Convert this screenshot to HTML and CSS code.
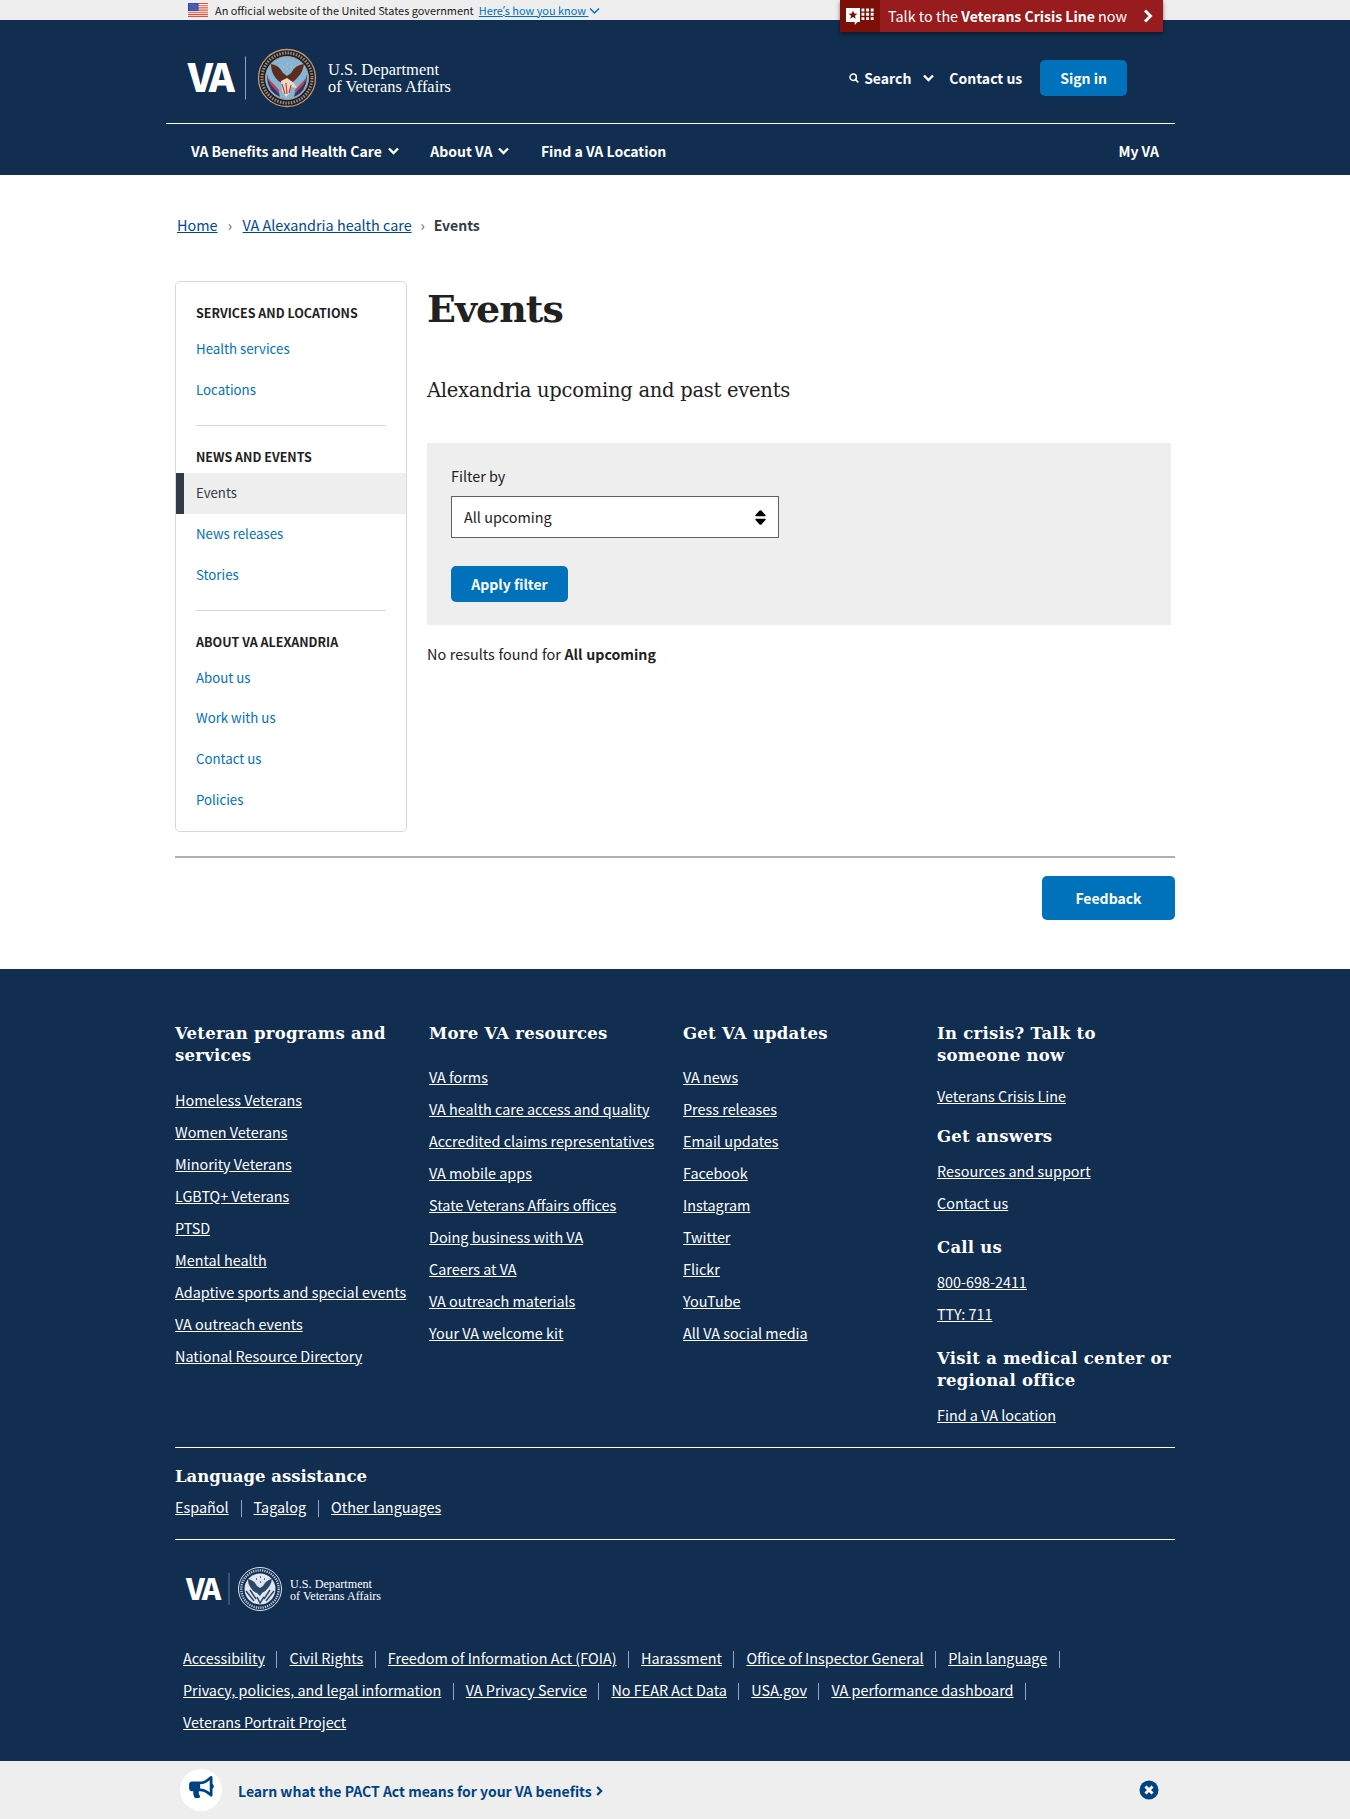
FILE: index.html
```html
<!DOCTYPE html>
<html lang="en">
<head>
<meta charset="utf-8">
<title>Events | VA Alexandria health care</title>
<link rel="stylesheet" href="styles.css">
</head>
<body>
<div class="gov-banner">
  <div class="gov-inner">
    <svg class="flag" width="20" height="14" viewBox="0 0 20 14"><rect width="20" height="14" fill="#fff"/><path d="M0 .5h20M0 2.7h20M0 4.9h20M0 7.1h20M0 9.2h20M0 11.4h20M0 13.4h20" stroke="#e0523f" stroke-width="1.15"/><rect width="10.5" height="8" fill="#3446a5"/><path d="M1.5 1.6h8M2.5 3.3h7M1.5 5h8M2.5 6.7h7" stroke="#c6cdf0" stroke-width=".7" stroke-dasharray=".8 1.2"/></svg>
    <span>An official website of the United States government</span>
    <a class="gov-link" href="#">Here<span class="apos">’</span>s how you know <svg width="11" height="8" viewBox="0 0 11 8"><path d="M1 1.500l4.500 4.500L10 1.500" fill="none" stroke="#0071bb" stroke-width="1.500"/></svg></a>
  </div>
  <a class="crisis" href="#">
    <span class="crisis-icon"><svg width="30" height="20" viewBox="0 0 30 20"><path d="M1 2h14v14h-2.500l-2.800 3V16H1z" fill="#fff"/><path d="M8 4.500l1.200 3 3.200.2-2.500 2 .9 3.100L8 11.100l-2.800 1.700.9-3.100-2.500-2 3.200-.2z" fill="#7c1008"/><path d="M16.500 4h13M16.500 8.300h13M16.500 12.600h13" stroke="#fff" stroke-width="2.900" stroke-dasharray="2.900 1.700"/></svg></span>
    <span class="crisis-text">Talk to the <b>Veterans Crisis Line</b> now</span>
    <svg class="crisis-arrow" width="10" height="14" viewBox="0 0 10 14"><path d="M2 1.500L7.500 7 2 12.500" fill="none" stroke="#fff" stroke-width="3"/></svg>
  </a>
</div>

<header class="header">
  <div class="header-inner">
    <div class="header-top">
      <svg class="logo" width="270" height="62" viewBox="0 0 270 62">
        <text x=".8" y="44.500" class="logo-va" font-size="39.500" letter-spacing="-3.500">VA</text>
        <path d="M58.500 9.500v43" stroke="#8fa3bd" stroke-width="1"/>
        <circle cx="100" cy="31" r="28.500" fill="#14223f" stroke="#c79a63" stroke-width="1.300"/>
        <circle cx="100" cy="31" r="25" fill="none" stroke="#a98a5c" stroke-width="3" stroke-dasharray="1.500 1.300"/>
        <circle cx="100" cy="31" r="21.500" fill="#86b4d6" stroke="#c79a63" stroke-width="1"/>
        <path d="M80 27q1 8 5 10l7 9 1 4q-12-5-13-19zM120 27q-1 8-5 10l-7 9-1 4q12-5 13-19z" fill="#27346f"/>
        <path d="M83 36l9 10M81 32l11 12M117 36l-9 10M119 32l-11 12" stroke="#b8434b" stroke-width="1.200"/>
        <path d="M84 17q8 1 12 9l4 3 4-3q4-8 13-9-1 8-6 13-4 5-8 6l-3 4-4-4q-5-1-8-6-4-5-4-13z" fill="#5c2d1c"/>
        <path d="M94 34l6-3 7 5 3 5-6-1-2 7-3 3-4-6z" fill="#ead9c4"/>
        <path d="M95 37l3 10M99 36l1 11M104 38l-2 8" stroke="#c14440" stroke-width="1.200"/>
        <path d="M96 20h1M100 17h1M104 20h1M100 22h1" stroke="#e8c65a" stroke-width="1.500"/>
        <text x="141" y="28" class="logo-dept" font-size="16.500" textLength="111" lengthAdjust="spacingAndGlyphs">U.S. Department</text>
        <text x="141" y="44.500" class="logo-dept" font-size="16.500" textLength="123" lengthAdjust="spacingAndGlyphs">of Veterans Affairs</text>
      </svg>
      <div class="tools">
        <a class="search" href="#"><svg width="10" height="10" viewBox="0 0 10 10"><circle cx="4.200" cy="4.200" r="3.200" fill="none" stroke="#fff" stroke-width="1.500"/><path d="M6.500 6.500L9.300 9.300" stroke="#fff" stroke-width="1.700"/></svg><span>Search</span><svg class="search-chev" width="11" height="8" viewBox="0 0 11 8"><path d="M1 1.500l4.500 4.500L10 1.500" fill="none" stroke="#fff" stroke-width="2.300"/></svg></a>
        <a class="contact" href="#">Contact us</a>
        <a class="btn sign-in" href="#">Sign in</a>
      </div>
    </div>
    <nav class="nav">
      <a href="#">VA Benefits and Health Care<svg width="11" height="8" viewBox="0 0 11 8"><path d="M1 1.500l4.500 4.500L10 1.500" fill="none" stroke="#fff" stroke-width="2.300"/></svg></a>
      <a href="#">About VA<svg width="11" height="8" viewBox="0 0 11 8"><path d="M1 1.500l4.500 4.500L10 1.500" fill="none" stroke="#fff" stroke-width="2.300"/></svg></a>
      <a href="#">Find a VA Location</a>
      <a class="my-va" href="#">My VA</a>
    </nav>
  </div>
</header>

<nav class="crumbs"><a href="#">Home</a><i>›</i><a href="#">VA Alexandria health care</a><i>›</i><b>Events</b></nav>

<div class="layout">
  <aside class="sidebar">
    <section>
      <h2>Services and locations</h2>
      <a href="#">Health services</a><a href="#">Locations</a>
    </section>
    <section>
      <h2>News and events</h2>
      <a class="current" href="#">Events</a><a href="#">News releases</a><a href="#">Stories</a>
    </section>
    <section>
      <h2>About VA Alexandria</h2>
      <a href="#">About us</a><a href="#">Work with us</a><a href="#">Contact us</a><a href="#">Policies</a>
    </section>
  </aside>
  <main class="main">
    <h1>Events</h1>
    <p class="intro">Alexandria upcoming and past events</p>
    <form class="filter">
      <label>Filter by</label>
      <div class="select"><span>All upcoming</span><svg width="11" height="15" viewBox="0 0 11 15"><path d="M5.500.3Q6.200.3 6.600.8L10.500 5q.5 1-.5 1.200H1Q0 6 .5 5L4.400.8Q4.800.3 5.500.3zM5.500 14.700q-.7 0-1.100-.5L.5 10Q0 9 1 8.800h9q1 .2.5 1.200l-3.900 4.200q-.4.5-1.100.5z"/></svg></div>
      <a class="btn apply" href="#">Apply filter</a>
    </form>
    <p class="results">No results found for <b>All upcoming</b></p>
  </main>
</div>
<div class="feedback-row"><a class="btn feedback" href="#">Feedback</a></div>

<footer class="footer">
  <div class="footer-inner">
    <div class="cols">
      <div class="col">
        <h3>Veteran programs and services</h3>
        <ul><li><a href="#">Homeless Veterans</a></li><li><a href="#">Women Veterans</a></li><li><a href="#">Minority Veterans</a></li><li><a href="#">LGBTQ+ Veterans</a></li><li><a href="#">PTSD</a></li><li><a href="#">Mental health</a></li><li><a href="#">Adaptive sports and special events</a></li><li><a href="#">VA outreach events</a></li><li><a href="#">National Resource Directory</a></li></ul>
      </div>
      <div class="col">
        <h3>More VA resources</h3>
        <ul><li><a href="#">VA forms</a></li><li><a href="#">VA health care access and quality</a></li><li><a href="#">Accredited claims representatives</a></li><li><a href="#">VA mobile apps</a></li><li><a href="#">State Veterans Affairs offices</a></li><li><a href="#">Doing business with VA</a></li><li><a href="#">Careers at VA</a></li><li><a href="#">VA outreach materials</a></li><li><a href="#">Your VA welcome kit</a></li></ul>
      </div>
      <div class="col">
        <h3>Get VA updates</h3>
        <ul><li><a href="#">VA news</a></li><li><a href="#">Press releases</a></li><li><a href="#">Email updates</a></li><li><a href="#">Facebook</a></li><li><a href="#">Instagram</a></li><li><a href="#">Twitter</a></li><li><a href="#">Flickr</a></li><li><a href="#">YouTube</a></li><li><a href="#">All VA social media</a></li></ul>
      </div>
      <div class="col contact-col">
        <h3>In crisis? Talk to<br>someone now</h3>
        <ul><li><a href="#">Veterans Crisis Line</a></li></ul>
        <h3>Get answers</h3>
        <ul><li><a href="#">Resources and support</a></li><li><a href="#">Contact us</a></li></ul>
        <h3>Call us</h3>
        <ul><li><a href="#">800-698-2411</a></li><li><a href="#">TTY: 711</a></li></ul>
        <h3>Visit a medical center or<br>regional office</h3>
        <ul><li><a href="#">Find a VA location</a></li></ul>
      </div>
    </div>
    <div class="languages">
      <h3>Language assistance</h3>
      <div class="inline-links"><a href="#">Español</a><i></i><a href="#">Tagalog</a><i></i><a href="#">Other languages</a></div>
    </div>
    <svg class="footer-logo" width="220" height="50" viewBox="0 0 220 50">
      <text x="11" y="35.500" class="logo-va" font-size="29.500" letter-spacing="-2.600">VA</text>
      <path d="M54 9v32" stroke="#5f7896" stroke-width="1"/>
      <circle cx="85" cy="25" r="21.500" fill="#112e51" stroke="#dfe6ef" stroke-width="1"/>
      <circle cx="85" cy="25" r="18.700" fill="none" stroke="#b9c6d6" stroke-width="2.400" stroke-dasharray="1.300 1"/>
      <circle cx="85" cy="25" r="15.500" fill="#dfe6ef"/>
      <path d="M73 15q6 1 9 7l3 2 3-2q3-6 9-7-1 6-4 9-3 4-6 5l-2 3-3-3q-4-1-6-5-3-3-3-9z" fill="#2c4767"/>
      <path d="M71 27l8 10M75 26l6 9M99 27l-8 10M95 26l-6 9M82 33l3 6 4-6M81 15h1M85 13h1M89 15h1M85 18h1" stroke="#2c4767" stroke-width="1.500" fill="none"/>
      <text x="115" y="23.500" class="logo-dept" font-size="12.300" textLength="82" lengthAdjust="spacingAndGlyphs">U.S. Department</text>
      <text x="115" y="36" class="logo-dept" font-size="12.300" textLength="91" lengthAdjust="spacingAndGlyphs">of Veterans Affairs</text>
    </svg>
    <div class="legal">
      <div class="inline-links"><a href="#">Accessibility</a><i></i><a href="#">Civil Rights</a><i></i><a href="#">Freedom of Information Act (FOIA)</a><i></i><a href="#">Harassment</a><i></i><a href="#">Office of Inspector General</a><i></i><a href="#">Plain language</a><i></i></div>
      <div class="inline-links"><a href="#">Privacy, policies, and legal information</a><i></i><a href="#">VA Privacy Service</a><i></i><a href="#">No FEAR Act Data</a><i></i><a href="#">USA.gov</a><i></i><a href="#">VA performance dashboard</a><i></i></div>
      <div class="inline-links"><a href="#">Veterans Portrait Project</a></div>
    </div>
  </div>
</footer>

<div class="promo">
  <div class="promo-inner">
    <span class="promo-icon"><svg width="25" height="22" viewBox="0 0 576 512"><path fill="#004382" d="M576 240c0-23.630-12.950-44.040-32-55.120V32.010C544 23.260 537.020 0 512 0c-7.120 0-14.190 2.380-19.980 7.020l-85.030 68.030C364.280 109.190 310.660 128 256 128H64c-35.350 0-64 28.650-64 64v96c0 35.350 28.650 64 64 64h33.700c-1.390 10.480-2.180 21.140-2.180 32 0 39.770 9.260 77.350 25.560 110.940 5.190 10.690 16.520 17.060 28.400 17.060h74.280c26.050 0 41.690-29.840 25.900-50.560-16.400-21.520-26.150-48.360-26.150-77.440 0-11.110 1.620-21.790 4.410-32H256c54.660 0 108.280 18.810 150.980 52.950l85.030 68.030a32.023 32.023 0 0 0 19.980 7.020c24.920 0 32-22.780 32-32V295.130C563.050 284.040 576 263.630 576 240zm-96 141.420l-33.050-26.440C392.950 311.780 325.120 288 256 288v-96c69.120 0 136.950-23.780 190.950-66.980L480 98.580v282.840z"/></svg></span>
    <a class="promo-link" href="#">Learn what the PACT Act means for your VA benefits<svg width="7" height="10" viewBox="0 0 7 10"><path d="M1.200 1l4 4-4 4" fill="none" stroke="#004382" stroke-width="2.200"/></svg></a>
    <svg class="close" width="20" height="20" viewBox="0 0 20 20"><circle cx="10" cy="10" r="9.500" fill="#004382"/><path d="M6.500 6.500l7 7M13.500 6.500l-7 7" stroke="#fff" stroke-width="3"/></svg>
  </div>
</div>
</body>
</html>
```
FILE: styles.css
```css
* { box-sizing: border-box; }
body {
  margin: 0;
  background: #fff;
  color: #212121;
  font: 14.4px/26px "Noto Sans CJK SC", "Noto Sans", sans-serif;
}
h1, h2, h3, p, ul { margin: 0; padding: 0; }
ul { list-style: none; }
b { font-size: 14px; font-weight: 700; }
i { font-style: normal; }
svg { display: block; flex: none; }

.gov-banner { position: relative; height: 20px; background: #eee; }
.gov-inner {
  display: flex;
  align-items: center;
  height: 20px;
  margin-left: 188px;
  padding-bottom: 1px;
  font-size: 10.920px;
  line-height: 18px;
}
.flag { margin-right: 7px; }
.gov-link { display: flex; align-items: center; margin-left: 5px; color: #0071bb; text-decoration: underline; white-space: pre; }
.gov-link svg { margin: 2px 0 0 1px; }
.apos { font-family: "Open Sans", sans-serif; }
.crisis {
  position: absolute;
  top: 0;
  left: 840px;
  display: flex;
  align-items: center;
  width: 323px;
  height: 32px;
  background: #981b1e;
  box-shadow: 0 2px 4px rgba(0, 0, 0, .5);
  color: #fff;
  text-decoration: none;
}
.crisis-icon { width: 40px; height: 32px; padding: 6px 0 0 5px; background: #7c1008; }
.crisis-text { width: 256px; padding-left: 8px; white-space: nowrap; }
.crisis-arrow { margin-left: 7px; }

.header { height: 155px; background: #112e51; }
.header-inner { width: 1009px; margin-left: 166px; color: #fff; }
.header a { color: #fff; font-size: 14px; font-weight: 700; text-decoration: none; }
.header-top {
  display: flex;
  align-items: center;
  justify-content: space-between;
  height: 104px;
  padding: 13px 48px 0 21px;
  border-bottom: 1px solid #fff;
}
.logo-va { fill: #fff; font-family: "Noto Sans CJK SC", sans-serif; font-weight: 900; }
.logo-dept { fill: #fff; font-family: "Liberation Serif", serif; }
.tools { display: flex; align-items: center; }
.search { display: flex; align-items: center; gap: 5px; }
.search-chev { margin-left: 7px; }
.contact { margin: 0 18px 0 15px; }
.btn {
  display: block;
  height: 36px;
  padding: 0 20px;
  border-radius: 5px;
  background: #0071bb;
  color: #fff;
  font-size: 14px;
  font-weight: 700;
  line-height: 36px;
  text-align: center;
  text-decoration: none;
  white-space: nowrap;
}
.nav { display: flex; align-items: center; height: 51px; padding: 3px 16px 0 25px; gap: 31.500px; }
.nav a { display: flex; align-items: center; gap: 6px; }
.nav .my-va { margin-left: auto; }

.crumbs { display: flex; height: 106px; padding: 37px 0 0 177px; }
.crumbs a { color: #004795; }
.crumbs i { width: 25px; text-align: center; color: #5b616b; }
.crumbs i + b { color: #323a45; }
.crumbs i + a + i { width: 22px; }

.layout {
  display: grid;
  grid-template-columns: 232px 744px;
  gap: 20px;
  width: 1000px;
  height: 551px;
  margin-left: 175px;
  align-items: start;
}
.sidebar { padding: 21px 0 10px; border: 1px solid #d6d7d9; border-radius: 5px; }
.sidebar h2 {
  margin: 0 20px 6px;
  font-size: 12.500px;
  line-height: 20px;
  text-transform: uppercase;
}
.sidebar a {
  display: block;
  height: 40.830px;
  padding-left: 20px;
  color: #0071bb;
  font-size: 13.250px;
  line-height: 39.500px;
  text-decoration: none;
}
.sidebar .current { padding-left: 12px; border-left: 8px solid #323a45; background: #eee; color: #323a45; }
.sidebar section + section::before {
  content: "";
  display: block;
  margin: 14.700px 20px 20.500px;
  border-top: 1px solid #d6d7d9;
}
.main { padding-top: 3px; }
h1, h3, .intro { font-family: "DejaVu Serif", serif; }
h1 { margin-bottom: 42px; font-size: 38px; line-height: 50px; letter-spacing: -1px; }
.intro { margin-bottom: 37px; font-size: 19.500px; line-height: 30px; letter-spacing: -.26px; }
.filter { height: 182px; padding: 20px 24px; background: #eee; }
.filter label { display: block; margin-bottom: 7px; }
.select {
  display: flex;
  align-items: center;
  justify-content: space-between;
  width: 328px;
  height: 42px;
  margin-bottom: 28px;
  padding: 0 12px;
  border: 1px solid #5b616b;
  background: #fff;
}
.apply { width: 117px; }
.results { margin-top: 16px; word-spacing: .5px; }
.results b { font-size: 14.200px; }
.feedback-row {
  display: flex;
  justify-content: flex-end;
  width: 1000px;
  height: 113px;
  margin: 24px 0 0 175px;
  padding-top: 18px;
  border-top: 2px solid #aeb0b5;
}
.feedback { width: 133px; height: 44px; line-height: 44px; }

.footer { height: 792px; background: #112e51; color: #fff; }
.footer-inner { width: 1000px; margin-left: 175px; padding-top: 53px; }
.footer a { color: #fff; }
.footer h3 { margin-bottom: -1px; padding-top: 1px; font-size: 16.500px; line-height: 22px; letter-spacing: .25px; white-space: nowrap; }
.cols { display: grid; grid-template-columns: repeat(4, 238px); gap: 16px; height: 425px; }
.col ul { line-height: 32px; white-space: nowrap; }
.col h3 + ul { margin-top: 17px; }
.col:first-child h3 { white-space: normal; }
.col:first-child ul { margin-top: 18px; }
.contact-col h3 + ul { margin-top: 8px; }
.contact-col h3:first-child + ul { margin-top: 14px; margin-bottom: -4.400px; }
.contact-col ul + h3 { margin-top: 17px; }
.languages { height: 93px; padding-top: 17px; border-top: 1px solid #fff; border-bottom: 1px solid #fff; }
.footer .languages h3 { margin-bottom: 6px; letter-spacing: 0; }
.inline-links { display: flex; align-items: center; }
.inline-links i { width: 1px; height: 17px; margin: 3px 12px 0; background: #8ba6ca; }
.footer-logo { margin-top: 24px; }
.legal { margin-top: 28px; padding-left: 8px; line-height: 32px; }
.legal i { margin-left: 11.500px; }

.promo { height: 58px; background: #eee; }
.promo-inner { display: flex; align-items: center; width: 979px; height: 57px; margin-left: 180px; }
.promo-icon {
  display: flex;
  justify-content: center;
  width: 42px;
  height: 42px;
  margin-right: 16px;
  padding-top: 7px;
  border-radius: 50%;
  background: #fff;
}
.promo-link {
  display: flex;
  align-items: center;
  gap: 4px;
  padding-top: 2px;
  color: #004382;
  font-size: 14px;
  font-weight: 700;
  text-decoration: none;
}
.close { margin-left: auto; }
```
